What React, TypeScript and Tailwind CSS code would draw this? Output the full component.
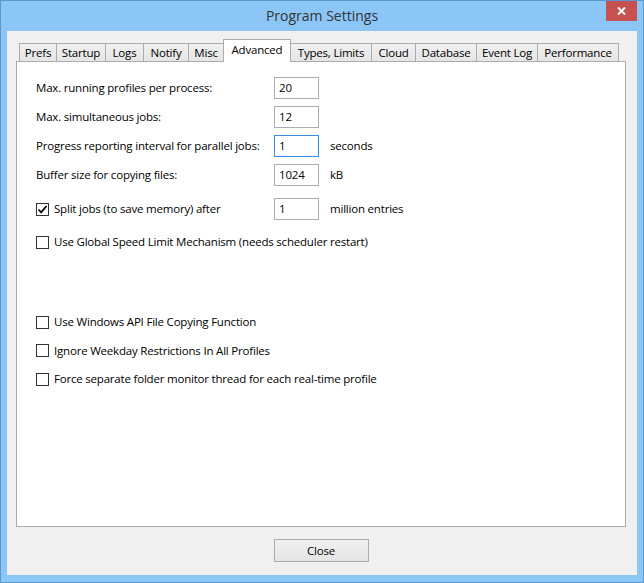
import React from "react"

const tabs = [
    { name: "Prefs", w: "w-[37px]" },
    { name: "Startup", w: "w-[49px]" },
    { name: "Logs", w: "w-[38px]" },
    { name: "Notify", w: "w-[45px]" },
    { name: "Misc", w: "w-[35px]" },
    { name: "Advanced", w: "w-[68px]", active: true },
    { name: "Types, Limits", w: "w-[80px]", afterActive: true },
    { name: "Cloud", w: "w-[44px]" },
    { name: "Database", w: "w-[61px]" },
    { name: "Event Log", w: "w-[61px]" },
    { name: "Performance", w: "w-[82px]", last: true },
]

const fields = [
    { label: "Max. running profiles per process:", value: "20" },
    { label: "Max. simultaneous jobs:", value: "12" },
    { label: "Progress reporting interval for parallel jobs:", value: "1", unit: "seconds", focused: true },
    { label: "Buffer size for copying files:", value: "1024", unit: "kB" },
]

const Checkbox = ({ checked }: { checked?: boolean }) => (
    <span className="flex h-[13px] w-[13px] shrink-0 items-center justify-center border border-[#333333] bg-white">
        {checked && (
            <svg width="11" height="11" viewBox="0 0 11 11">
                <path d="M1.5 5.5 L4.2 8.3 L9.5 2" fill="none" stroke="#000" strokeWidth="1.8" />
            </svg>
        )}
    </span>
)

const CheckRow = ({ label, checked }: { label: string; checked?: boolean }) => (
    <div className="flex h-[22px] items-center gap-[5px]">
        <Checkbox checked={checked} />
        <span>{label}</span>
    </div>
)

export default function App() {
    return (
        <div className="flex h-[583px] w-[644px] flex-col whitespace-nowrap border border-[#5c97cf] bg-[#8cc6f7] font-['Open_Sans','Noto_Sans',sans-serif] text-[11.5px] leading-none tracking-[-0.2px] text-black">
            {/* title bar */}
            <div className="relative flex h-[30px] shrink-0 items-center justify-center">
                <span className="text-[14px] tracking-normal text-[#333333]">Program Settings</span>
                <button className="absolute right-[6px] top-0 flex h-[20px] w-[31px] items-center justify-center bg-[#c75050]">
                    <svg width="9" height="8" viewBox="0 0 9 8">
                        <path d="M1 0.5 L8 7.5 M8 0.5 L1 7.5" stroke="#fff" strokeWidth="2" />
                    </svg>
                </button>
            </div>

            {/* client area */}
            <div className="mx-[6px] mb-[7px] flex flex-1 flex-col bg-[#f0f0f0] pl-[9px] pr-[11px] pt-[8px]">
                <div className="relative z-10 -mb-px flex h-[23px] items-end pl-[3px]">
                    {tabs.map((t) => (
                        <div
                            key={t.name}
                            className={
                                t.active
                                    ? `${t.w} flex h-[23px] items-center justify-center border border-b-0 border-[#acacac] bg-white pb-[2px]`
                                    : t.afterActive
                                        ? `${t.w} flex h-[19px] items-center justify-center border-t border-b border-[#acacac] bg-gradient-to-b from-[#f0f0f0] to-[#e5e5e5]`
                                        : t.last
                                            ? `${t.w} flex h-[19px] items-center justify-center border border-[#acacac] bg-gradient-to-b from-[#f0f0f0] to-[#e5e5e5]`
                                            : `${t.w} flex h-[19px] items-center justify-center border-t border-l border-b border-[#acacac] bg-gradient-to-b from-[#f0f0f0] to-[#e5e5e5]`
                            }
                        >
                            {t.name}
                        </div>
                    ))}
                </div>

                <div className="h-[466px] border border-[#acacac] bg-white pl-[19px] pt-[15px]">
                    <div className="flex flex-col gap-[7px]">
                        {fields.map((f) => (
                            <div key={f.label} className="flex h-[22px] items-center">
                                <span className="w-[238px]">{f.label}</span>
                                <span
                                    className={`flex h-[22px] w-[45px] items-center border px-[4px] ${f.focused ? "border-[#3c8ee0]" : "border-[#abadb3]"}`}
                                >
                                    {f.value}
                                </span>
                                {f.unit && <span className="ml-[11px]">{f.unit}</span>}
                            </div>
                        ))}
                    </div>

                    <div className="mt-[12px] flex h-[22px] items-center">
                        <div className="flex w-[238px] items-center gap-[5px]">
                            <Checkbox checked />
                            <span>Split jobs (to save memory) after</span>
                        </div>
                        <span className="flex h-[22px] w-[45px] items-center border border-[#abadb3] px-[4px]">1</span>
                        <span className="ml-[11px]">million entries</span>
                    </div>

                    <div className="mt-[11px]">
                        <CheckRow label="Use Global Speed Limit Mechanism (needs scheduler restart)" />
                    </div>

                    <div className="mt-[58px] flex flex-col gap-[6.5px]">
                        <CheckRow label="Use Windows API File Copying Function" />
                        <CheckRow label="Ignore Weekday Restrictions In All Profiles" />
                        <CheckRow label="Force separate folder monitor thread for each real-time profile" />
                    </div>
                </div>

                <div className="flex flex-1 items-start justify-center pt-[12px]">
                    <button className="flex h-[23px] w-[95px] items-center justify-center border border-[#acacac] bg-gradient-to-b from-[#f0f0f0] to-[#e5e5e5]">
                        Close
                    </button>
                </div>
            </div>
        </div>
    )
}
